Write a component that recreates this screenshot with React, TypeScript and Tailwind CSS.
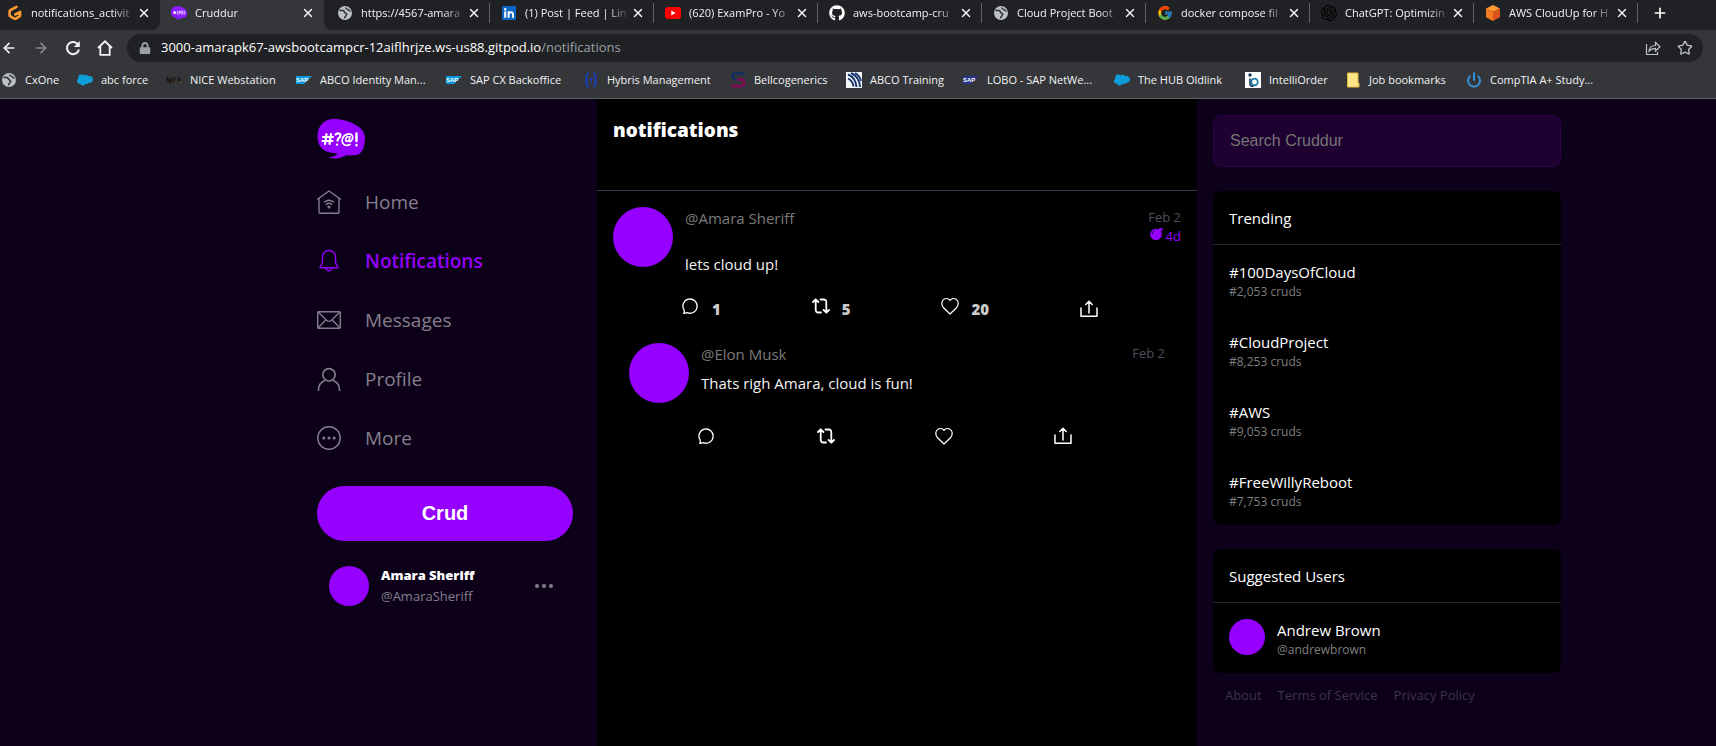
import React from "react";
import { FaGithub, FaLock } from "react-icons/fa";
import { FcGoogle } from "react-icons/fc";
import { SiOpenai, SiSalesforce } from "react-icons/si";
import { ArrowLeft, ArrowRight, Plus, Power, Star, X } from "lucide-react";

/* ---------- browser icons ---------- */

function GlobeIcon() {
  return (
    <svg viewBox="0 0 16 16" className="size-4">
      <circle cx="8" cy="8" r="7" fill="#bdc1c6" />
      <path d="M2.500 5.500c2 0 2.500-.5 4 .3 1.300.7.5 1.700 2 2.200 1.500.5 1.500 1.500.5 2.500s-.8 1.800-1.800 2.500" fill="none" stroke="#35363a" strokeWidth="1.600" />
      <path d="M8.500 2.500c.2 1.500 1 1.500 2 1.700 1.200.2 1 1.500 3 2" fill="none" stroke="#35363a" strokeWidth="1.500" />
    </svg>
  );
}

function GitpodIcon() {
  return (
    <svg viewBox="0 0 16 16" className="size-4">
      <path d="M9.500 1.800 3.400 5.200a1.500 1.500 0 0 0-.8 1.300v3.600c0 .5.3 1 .8 1.300l3.800 2.200c.5.300 1.100.300 1.600 0l3.500-2c.5-.3.8-.8.8-1.300V6.800L8.300 9.500" fill="none" stroke="#ff9a32" strokeWidth="2.600" strokeLinecap="round" strokeLinejoin="round" />
    </svg>
  );
}

function BubbleIcon() {
  return (
    <svg viewBox="0 0 48 40" className="h-3.5 w-4">
      <path d="M18 0C6 0 0 8 0 18c0 11 8 17 20 17-2 3-5 3-8 3 8 3 15 1 20-3 10 1 16-3 16-15C48 8 32 0 18 0Z" fill="#8b1cff" />
      <circle cx="11" cy="19" r="4" fill="#fff" />
      <path d="M19 14v10M24 25v-11h4v6h-4M32 25V14h4v11M41 13v12" stroke="#e9d5ff" strokeWidth="2.500" fill="none" />
    </svg>
  );
}

function LinkedInIcon() {
  return (
    <svg viewBox="0 0 16 16" className="size-4">
      <rect x="1" y="1" width="14" height="14" rx="1" fill="#0a66c2" />
      <rect x="3.200" y="6.300" width="2" height="6.500" fill="#fff" />
      <circle cx="4.200" cy="4.200" r="1.200" fill="#fff" />
      <path d="M7.600 12.800V6.300M7.600 9.500c0-3 4.400-3.300 4.400 0v3.300" stroke="#fff" strokeWidth="2" fill="none" />
    </svg>
  );
}

function YouTubeIcon() {
  return (
    <svg viewBox="0 0 16 16" className="size-4">
      <rect x="0" y="2" width="16" height="12" rx="3" fill="#f00" />
      <path d="M6.300 5.500v5l4.300-2.500z" fill="#fff" />
    </svg>
  );
}

function CubeIcon() {
  return (
    <svg viewBox="0 0 16 16" className="size-4">
      <path d="M8 0 15 3.500 8 7 1 3.500z" fill="#ff9a2e" />
      <path d="M1 3.500 8 7v9l-7-3.700z" fill="#f47b20" />
      <path d="M15 3.500 8 7v9l7-3.700z" fill="#d9531a" />
    </svg>
  );
}

function SapIcon({ dark = false }: { dark?: boolean }) {
  return (
    <svg viewBox="0 0 16 10" className="h-2.5 w-4">
      <path d="M0 1h16L8 9H0z" fill={dark ? "#26348b" : "#0c9bdf"} />
      <text x="0" y="7" fontSize="6" fontWeight="800" fill="#fff" fontFamily="Liberation Sans, sans-serif">SAP</text>
    </svg>
  );
}

function NiceIcon() {
  return (
    <svg viewBox="0 0 16 8" className="h-2 w-4">
      <path d="M1 6.500v-5l3 5v-5M6 1.500v5M10.500 2H8.500v4h2M15 2h-2.500v4H15M12.500 4H15" fill="none" stroke="#17120a" strokeWidth="1.100" />
      <path d="M8.500 6h2M12.500 6H15" stroke="#75601f" strokeWidth="1" />
    </svg>
  );
}

function HybrisIcon() {
  return (
    <svg viewBox="0 0 16 16" className="size-4">
      <path d="M6 1.500C3 1.500 3.500 4 3.500 8s-.5 6.500 2.500 6.500M10 1.500c3 0 2.500 2.500 2.500 6.500s.5 6.500-2.500 6.500" fill="none" stroke="#1b3fae" strokeWidth="2.200" />
      <path d="M5.800 6h4.400L8 9.500zM7.300 9h1.400v2H7.300z" fill="#1b3fae" />
    </svg>
  );
}

function BellcoIcon() {
  return (
    <svg viewBox="0 0 16 16" className="size-4">
      <path d="M15 1.500H5.500a3 3 0 0 0 0 6H9" fill="none" stroke="#10325f" strokeWidth="2.600" />
      <path d="M7 7.500h4a3.300 3.300 0 0 1 0 6.600H1.500" fill="none" stroke="#820a57" strokeWidth="2.600" />
    </svg>
  );
}

function TrainingIcon() {
  return (
    <svg viewBox="0 0 16 16" className="size-4">
      <rect width="16" height="16" fill="#f5f7fb" />
      <path d="M5 1c5 2 8.500 7 9 14M2 2.500c5 2 8 6 8.500 12.500M2 6.500c3 1.500 5 4 5.500 8M9 1c3 1.500 5 4 6 8" fill="none" stroke="#17346e" strokeWidth="1.900" />
    </svg>
  );
}

function IntelliIcon() {
  return (
    <svg viewBox="0 0 16 16" className="size-4">
      <rect width="16" height="16" fill="#fff" />
      <circle cx="5" cy="3" r="1.700" fill="#14324f" />
      <path d="M5 6.500V12c0 2 2 2.500 3.500 2.200" fill="none" stroke="#14324f" strokeWidth="1.600" />
      <circle cx="9.500" cy="10" r="3.300" fill="none" stroke="#1b79a8" strokeWidth="1.700" />
    </svg>
  );
}

function NoteIcon() {
  return (
    <svg viewBox="0 0 16 16" className="size-4">
      <path d="M2.500 1h10.500v10h1v4H2.500z" fill="#ffe58a" stroke="#e5b93c" strokeWidth="1" />
    </svg>
  );
}

function ReloadIcon() {
  return (
    <svg viewBox="0 0 16 16" className="size-4">
      <path d="M13.200 4.700A6.100 6.100 0 1 0 14 9.500" fill="none" stroke="#f1f3f4" strokeWidth="2" />
      <path d="M14.800 1v6H8.800z" fill="#f1f3f4" />
    </svg>
  );
}

function HouseIcon() {
  return (
    <svg viewBox="0 0 16 16" className="size-4">
      <path d="M1 8 8 1.300 15 8M3.300 6.500V14.800h9.400V6.500" fill="none" stroke="#f1f3f4" strokeWidth="1.800" />
    </svg>
  );
}

function ShareArrowIcon() {
  return (
    <svg viewBox="0 0 16 16" className="size-4" fill="none" stroke="#bdc1c6" strokeWidth="1.200">
      <path d="M1.500 4v10.500H12.500V12" />
      <path d="M4 11c.5-4 3-5.500 6.500-5.500V2.500L15 6.800l-4.500 4.200V8.300C8 8.300 6 8.800 4 11Z" />
    </svg>
  );
}

/* ---------- app icons ---------- */

const lineProps = { fill: "none", stroke: "currentColor", strokeWidth: 1.4 } as const;

function HomeWifiIcon() {
  return (
    <svg viewBox="0 0 24 24" className="size-6" {...lineProps} strokeLinecap="round" strokeLinejoin="round">
      <path d="M.8 9 12 1l11.200 8" />
      <path d="M2 8.300V22c0 .8.500 1.200 1.200 1.200h17.600c.8 0 1.200-.5 1.200-1.200V8.300" />
      <path d="M7.500 12c2.800-2.300 6.200-2.300 9 0M9.300 14.400c1.700-1.400 3.700-1.400 5.400 0" />
      <circle cx="12" cy="17" r=".8" fill="currentColor" />
    </svg>
  );
}

function BellIcon() {
  return (
    <svg viewBox="0 0 24 24" className="size-6" {...lineProps} strokeLinejoin="round">
      <path d="M12 1.500c-4.200 0-6.500 3-6.500 7V13c0 2.500-2.500 3.500-2.500 5.200 0 .4.300.6.7.6h16.600c.4 0 .7-.2.7-.6 0-1.700-2.500-2.700-2.500-5.200V8.500c0-4-2.300-7-6.500-7Z" />
      <path d="M9 19c.3 1.800 1.500 2.800 3 2.800s2.700-1 3-2.800" />
    </svg>
  );
}

function MailIcon() {
  return (
    <svg viewBox="0 0 24 24" className="size-6" {...lineProps} strokeLinejoin="round">
      <rect x=".7" y="3.700" width="22.600" height="16.600" rx="1" />
      <path d="m1 4 8.500 8.200c1.500 1.400 3.500 1.400 5 0L23 4M1 20l8-8.200M23 20l-8-8.200" />
    </svg>
  );
}

function PersonIcon() {
  return (
    <svg viewBox="0 0 24 24" className="size-6" {...lineProps} strokeWidth={1.6}>
      <circle cx="12" cy="7.800" r="6.200" />
      <path d="M1.500 24v-1.500c0-4 2.500-7.300 6.300-9M22.500 24v-1.500c0-4-2.500-7.300-6.300-9" />
    </svg>
  );
}

function MoreIcon() {
  return (
    <svg viewBox="0 0 24 24" className="size-6" {...lineProps}>
      <circle cx="12" cy="12" r="11.200" />
      <g fill="currentColor" stroke="none">
        <circle cx="6.800" cy="12" r="1.500" />
        <circle cx="12" cy="12" r="1.500" />
        <circle cx="17.200" cy="12" r="1.500" />
      </g>
    </svg>
  );
}

function Logo() {
  return (
    <svg viewBox="0 0 48 40" className="h-10 w-12" role="img" aria-label="Cruddur">
      <path d="M17 0C7 0 .5 7 .5 17.500.5 29 8 34 20.500 34.500 18.500 37.500 15 38 11 38.300c6.500 2.200 13 1.200 18.500-2 4 .3 8 0 11-.5C45.500 34 48 27 48 18.500 48 7 29 0 17 0Z" fill="#9500ff" />
      <g fill="none" stroke="#fff" strokeWidth="2.200" strokeLinecap="round">
        <path d="m9.500 15-1.500 10M14 15l-1.500 10M6 18h10M5.500 22h10" />
        <path d="M18.500 15.500c3-2.500 6-.5 4.500 2.200-.8 1.500-2.300 1.700-2.500 4M20 25.500v.2" />
        <path strokeWidth="1.700" d="M33 25.500c-5 2.500-9-1-7.500-6 1.500-4.500 8.500-6.500 10-2.500 1 3-1.500 6-3 5.500-1-.4-.2-2.500.5-4.500-2.500-1.500-4.500 1-4.300 3 .3 2 2.500 1.500 3.800-.5" />
        <path strokeWidth="2.500" d="M39.500 14.500V22M39.500 26v.2" />
      </g>
    </svg>
  );
}

function ReplyIcon() {
  return (
    <svg viewBox="0 0 18 18" className="size-[18px]" fill="none" stroke="currentColor" strokeWidth="1.300" strokeLinejoin="round">
      <path d="M1.700 16.300c.7-1 .8-2 .3-3.500A7.100 7.100 0 1 1 5.200 15.600c-1.200.4-2.300.6-3.500.7Z" />
    </svg>
  );
}

function RepostIcon() {
  return (
    <svg viewBox="0 0 18 18" className="size-[18px]" fill="none" stroke="currentColor" strokeWidth="1.800" strokeLinecap="round" strokeLinejoin="round">
      <path d="M1 5 3.700 2.300l2.700 2.700M3.700 3v10a2.500 2.500 0 0 0 2.500 2.500H9" />
      <path d="M17 13l-2.700 2.700-2.700-2.700M14.300 15V5a2.500 2.500 0 0 0-2.500-2.500H8.500" />
    </svg>
  );
}

function HeartIcon() {
  return (
    <svg viewBox="0 0 18 18" className="size-[18px]" fill="none" stroke="currentColor" strokeWidth="1.200" strokeLinejoin="round">
      <path d="M9 3.500C7.500.8 3.500.8 1.700 3.500.2 6 .8 8.800 2.800 11L9 17l6.200-6c2-2.200 2.600-5 1.100-7.500C14.500.8 10.500.8 9 3.500Z" />
    </svg>
  );
}

function ShareIcon() {
  return (
    <svg viewBox="0 0 18 18" className="size-[18px]" fill="none" stroke="currentColor" strokeWidth="1.500" strokeLinecap="round" strokeLinejoin="round">
      <path d="M1 8v8.200h16V8M9 13V1.500M5.800 4.500 9 1.300l3.200 3.200" />
    </svg>
  );
}

function BombIcon() {
  return (
    <svg viewBox="0 0 14 14" className="size-3.5" fill="#9500ff">
      <circle cx="6" cy="7.500" r="5.800" />
      <path d="M8 3.200 9.500 1l4.300.4-1.500.9.800 1.200-1.900.1-.2 2.200Z" />
      <path d="M2.300 7c.2-1.800 1.300-3 3-3.300" stroke="#000" strokeWidth=".9" fill="none" strokeDasharray="1.500 .7" />
    </svg>
  );
}

/* ---------- browser frame ---------- */

type TabInfo = { title: string; icon: React.ReactNode };

const otherTabs: TabInfo[] = [
  { title: "https://4567-amara", icon: <GlobeIcon /> },
  { title: "(1) Post | Feed | Lin", icon: <LinkedInIcon /> },
  { title: "(620) ExamPro - Yo", icon: <YouTubeIcon /> },
  { title: "aws-bootcamp-cru", icon: <FaGithub className="size-4 text-white" /> },
  { title: "Cloud Project Boot", icon: <GlobeIcon /> },
  { title: "docker compose fil", icon: <FcGoogle className="size-4" /> },
  { title: "ChatGPT: Optimizin", icon: <SiOpenai className="size-4 text-black" /> },
  { title: "AWS CloudUp for H", icon: <CubeIcon /> },
];

function Tab({ title, icon, className = "" }: TabInfo & { className?: string }) {
  return (
    <div className={`flex h-[30px] w-[164px] shrink-0 items-center pb-1 pl-[11px] ${className}`}>
      <span className="shrink-0">{icon}</span>
      <span className="ml-2 w-[110px] whitespace-nowrap text-[#f1f3f4] [mask-image:linear-gradient(to_right,#000_75%,transparent_96%)]">
        {title}
      </span>
      <button aria-label={`Close ${title}`} className="-ml-1 text-[#f1f3f4]">
        <X className="size-3.5" strokeWidth={2.5} />
      </button>
    </div>
  );
}

const bookmarks = [
  { label: "CxOne", icon: <GlobeIcon />, width: "w-[76px]" },
  { label: "abc force", icon: <SiSalesforce className="size-4 text-[#0d9ddb]" />, width: "w-[89px]" },
  { label: "NICE Webstation", icon: <NiceIcon />, width: "w-[130px]" },
  { label: "ABCO Identity Man...", icon: <SapIcon />, width: "w-[150px]" },
  { label: "SAP CX Backoffice", icon: <SapIcon />, width: "w-[137px]" },
  { label: "Hybris Management", icon: <HybrisIcon />, width: "w-[147px]" },
  { label: "Bellcogenerics", icon: <BellcoIcon />, width: "w-[116px]" },
  { label: "ABCO Training", icon: <TrainingIcon />, width: "w-[117px]" },
  { label: "LOBO - SAP NetWe...", icon: <SapIcon dark />, width: "w-[151px]" },
  { label: "The HUB Oldlink", icon: <SiSalesforce className="size-4 text-[#0d9ddb]" />, width: "w-[131px]" },
  { label: "IntelliOrder", icon: <IntelliIcon />, width: "w-[100px]" },
  { label: "Job bookmarks", icon: <NoteIcon />, width: "w-[121px]" },
  { label: "CompTIA A+ Study...", icon: <Power className="size-4 text-[#3391d6]" strokeWidth={3} />, width: "w-[150px]" },
];

function BrowserFrame() {
  return (
    <header className="bg-[#35363a] text-[11px] text-[#f1f3f4]">
      <div className="flex h-[30px] overflow-hidden">
        <Tab title="notifications_activit" icon={<GitpodIcon />} className="-ml-1 rounded-br-lg bg-[#202124]" />
        <Tab title="Cruddur" icon={<BubbleIcon />} />
        <div className="flex min-w-0 flex-1 items-center rounded-bl-lg bg-[#202124] pl-0.5">
          {otherTabs.map((tab) => (
            <React.Fragment key={tab.title}>
              <Tab {...tab} className="-mr-px" />
              <span className="mb-1 h-5 w-px shrink-0 bg-[#5f6368]" />
            </React.Fragment>
          ))}
          <button aria-label="New tab" className="mb-1 ml-3.5 shrink-0 text-white">
            <Plus className="size-4" strokeWidth={2.5} />
          </button>
        </div>
      </div>

      <div className="flex h-9 items-center">
        <div className="flex w-[127px] shrink-0 items-center gap-4 pl-px">
          <button aria-label="Back"><ArrowLeft className="size-4 text-[#f1f3f4]" strokeWidth={2.5} /></button>
          <button aria-label="Forward"><ArrowRight className="size-4 text-[#85878b]" strokeWidth={2.5} /></button>
          <button aria-label="Reload"><ReloadIcon /></button>
          <button aria-label="Home page"><HouseIcon /></button>
        </div>
        <div className="mr-[13px] flex h-7 flex-1 items-center rounded-full bg-[#202124] pl-3 pr-[10px]">
          <FaLock className="size-3 text-[#9aa0a6]" />
          <a href="#notifications" className="ml-2.5 flex-1 text-[13px] text-white">
            3000-amarapk67-awsbootcampcr-12aiflhrjze.ws-us88.gitpod.io<span className="text-[#9aa0a6]">/notifications</span>
          </a>
          <button aria-label="Share page"><ShareArrowIcon /></button>
          <button aria-label="Bookmark page" className="ml-4"><Star className="size-4 text-[#bdc1c6]" /></button>
        </div>
      </div>

      <nav aria-label="Bookmarks" className="flex h-[33px] items-center overflow-hidden border-b border-[#5f6368] pb-1 pl-px">
        {bookmarks.map((b) => (
          <a key={b.label} href="#bookmark" className={`flex shrink-0 items-center gap-2 whitespace-nowrap ${b.width}`}>
            {b.icon}
            {b.label}
          </a>
        ))}
      </nav>
    </header>
  );
}

/* ---------- left column ---------- */

const navItems = [
  { label: "Home", icon: <HomeWifiIcon />, active: false },
  { label: "Notifications", icon: <BellIcon />, active: true },
  { label: "Messages", icon: <MailIcon />, active: false },
  { label: "Profile", icon: <PersonIcon />, active: false },
  { label: "More", icon: <MoreIcon />, active: false },
];

function Sidebar() {
  return (
    <div className="pr-6 pt-5">
      <Logo />
      <nav aria-label="Main" className="mt-3.5">
        {navItems.map((item) => (
          <a
            key={item.label}
            href={`#${item.label.toLowerCase()}`}
            className={`flex h-[59px] items-center gap-6 text-[19px] ${item.active ? "font-semibold text-[#9500ff]" : "text-[#857f8b]"}`}
          >
            <span className="pb-0.5">{item.icon}</span>
            {item.label}
          </a>
        ))}
      </nav>
      <button className="mt-[18px] h-[55px] w-full rounded-full bg-[#9500ff] pb-0.5 font-['Liberation_Sans',sans-serif] text-xl font-bold text-white">
        Crud
      </button>
      <div className="mt-6 flex items-center gap-3 pl-3 pr-5">
        <span className="size-10 rounded-full bg-[#9500ff]" />
        <div className="flex-1">
          <div className="text-[13px] font-extrabold leading-5 text-white">Amara Sheriff</div>
          <div className="text-[13px] leading-[22px] text-[#857f8b]">@AmaraSheriff</div>
        </div>
        <button aria-label="Account options">
          <svg viewBox="0 0 18 4" className="h-1 w-[18px]" fill="#857f8b">
            <circle cx="2" cy="2" r="2" />
            <circle cx="9" cy="2" r="2" />
            <circle cx="16" cy="2" r="2" />
          </svg>
        </button>
      </div>
    </div>
  );
}

/* ---------- feed ---------- */

type Post = {
  handle: string;
  message: string;
  date: string;
  expires?: string;
  replies?: number;
  reposts?: number;
  likes?: number;
};

function Action({ label, icon, count }: { label: string; icon: React.ReactNode; count?: number }) {
  return (
    <button aria-label={label} className="flex items-start gap-3">
      {icon}
      {count !== undefined && <span className="text-[15px] font-extrabold leading-6 text-[#cccccc]">{count}</span>}
    </button>
  );
}

function PostItem({ post, className, actionsClassName }: { post: Post; className: string; actionsClassName: string }) {
  return (
    <article className={className}>
      <div className="flex gap-3">
        <span className="size-[60px] shrink-0 rounded-full bg-[#9500ff]" />
        <div className="flex-1">
          <div className="flex items-start justify-between">
            <span className="pb-0.5 text-[15px] leading-[22px] text-[#7a7a7a]">{post.handle}</span>
            <div className="text-[13px] leading-5 text-[#4b4f60]">
              <div>{post.date}</div>
              {post.expires && (
                <div className="flex h-[21px] items-start justify-end gap-0.5 text-[#9500ff]">
                  <BombIcon />
                  <span className="leading-[18px]">{post.expires}</span>
                </div>
              )}
            </div>
          </div>
          <p className="pt-[5px] text-[15px] leading-[22px] text-[#f2f2f2]">{post.message}</p>
        </div>
      </div>
      <div className={`flex items-center justify-between pl-[69px] text-white ${actionsClassName}`}>
        <Action label="Reply" icon={<ReplyIcon />} count={post.replies} />
        <Action label="Repost" icon={<RepostIcon />} count={post.reposts} />
        <Action label="Like" icon={<HeartIcon />} count={post.likes} />
        <Action label="Share" icon={<ShareIcon />} />
      </div>
    </article>
  );
}

function Feed() {
  return (
    <main className="bg-black">
      <div className="h-[92px] border-b border-[#3b3f50] px-4 pt-[17px]">
        <h1 className="text-[19px] font-extrabold leading-7 text-white">notifications</h1>
      </div>
      <PostItem
        post={{ handle: "@Amara Sheriff", message: "lets cloud up!", date: "Feb 2", expires: "4d", replies: 1, reposts: 5, likes: 20 }}
        className="px-4 pb-1.5 pt-4"
        actionsClassName="mt-[22px] pr-[83px]"
      />
      <PostItem
        post={{ handle: "@Elon Musk", message: "Thats righ Amara, cloud is fun!", date: "Feb 2" }}
        className="px-8 pt-4"
        actionsClassName="mt-6 pr-[93px]"
      />
    </main>
  );
}

/* ---------- right column ---------- */

const trends = [
  { tag: "#100DaysOfCloud", count: "#2,053 cruds" },
  { tag: "#CloudProject", count: "#8,253 cruds" },
  { tag: "#AWS", count: "#9,053 cruds" },
  { tag: "#FreeWillyReboot", count: "#7,753 cruds" },
];

function Card({ title, children }: { title: string; children: React.ReactNode }) {
  return (
    <section className="mt-6 rounded-lg bg-black">
      <h2 className="border-b border-[#202636] px-4 pb-[15px] pt-4 text-[15px] leading-[22px] text-white">{title}</h2>
      {children}
    </section>
  );
}

function Aside() {
  return (
    <aside className="pl-4 pt-4">
      <input
        type="text"
        aria-label="Search Cruddur"
        placeholder="Search Cruddur"
        className="block h-[52px] w-full rounded-lg border border-[#2a0048] bg-[#1e0131] px-4 font-['Liberation_Sans',sans-serif] text-base text-white placeholder:text-[#757575]"
      />
      <Card title="Trending">
        {trends.map((t) => (
          <a key={t.tag} href="#trend" className="block h-[70px] px-4 pt-4">
            <div className="text-[15px] leading-[22px] text-white">{t.tag}</div>
            <div className="text-xs font-medium leading-[18px] text-[#7f7f7f]">{t.count}</div>
          </a>
        ))}
      </Card>
      <Card title="Suggested Users">
        <a href="#andrewbrown" className="flex h-[70px] gap-3 px-4 pt-4">
          <span className="size-9 rounded-full bg-[#9500ff]" />
          <span className="block">
            <span className="block text-[15px] leading-[22px] text-white">Andrew Brown</span>
            <span className="block text-xs font-medium leading-[18px] text-[#7f7f7f]">@andrewbrown</span>
          </span>
        </a>
      </Card>
      <footer className="flex gap-4 pl-3 pt-3 text-[13px] font-medium leading-5 text-[#3d3547]">
        <a href="#about">About</a>
        <a href="#terms">Terms of Service</a>
        <a href="#privacy">Privacy Policy</a>
      </footer>
    </aside>
  );
}

export default function App() {
  return (
    <div className="flex min-h-screen flex-col bg-[#0c0119] font-['Open_Sans','Noto_Sans',sans-serif]">
      <BrowserFrame />
      <div className="grid flex-1 grid-cols-[317fr_280px_600px_364px_155fr]">
        <div />
        <Sidebar />
        <Feed />
        <Aside />
      </div>
    </div>
  );
}
